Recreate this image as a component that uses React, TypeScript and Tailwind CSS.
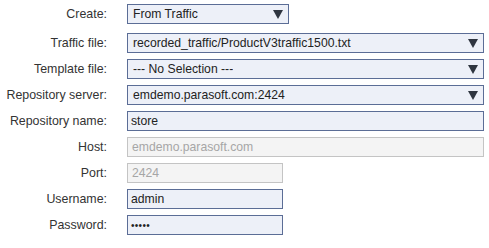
const labelCls =
  'w-[107px] shrink-0 text-right text-[12.4px] text-[#333333] leading-none';

const Select = ({ value, width }: { value: string; width: string }) => (
  <div
    className={`${width} h-[20px] flex items-center justify-between border border-[#5b6d96] bg-[#edf0f8] pl-[5px] pr-[5px] text-[12.2px] text-[#222222]`}
  >
    <span className="truncate">{value}</span>
    <svg width="10" height="9" viewBox="0 0 10 9" className="shrink-0">
      <path d="M0 0 H10 L5 9 Z" fill="#2f3540" />
    </svg>
  </div>
);

const Input = ({
  value,
  width,
  disabled,
  small,
}: {
  value: string;
  width: string;
  disabled?: boolean;
  small?: boolean;
}) => (
  <div
    className={
      disabled
        ? `${width} h-[20px] flex items-center border border-[#c4c4c4] bg-[#f4f4f4] pl-[4px] text-[12.2px] text-[#a6a6a6]`
        : `${width} h-[20px] flex items-center border border-[#5b6d96] bg-[#edf0f8] pl-[3px] text-[#222222] ${small ? 'text-[10px] tracking-[0.3px]' : 'text-[12.2px]'}`
    }
  >
    {value}
  </div>
);

const Row = ({ label, children }: { label: string; children: React.ReactNode }) => (
  <div className="flex items-center gap-[20px]">
    <div className={labelCls}>{label}</div>
    {children}
  </div>
);

export default function App() {
  return (
    <div
      className="w-[489px] h-[248px] bg-white pt-[4px]"
      style={{ fontFamily: '"Liberation Sans", Arial, sans-serif' }}
    >
      <Row label="Create:">
        <Select value="From Traffic" width="w-[162px]" />
      </Row>
      <div className="mt-[9px] flex flex-col gap-[6px]">
        <Row label="Traffic file:">
          <Select value="recorded_traffic/ProductV3traffic1500.txt" width="w-[357px]" />
        </Row>
        <Row label="Template file:">
          <Select value="--- No Selection ---" width="w-[357px]" />
        </Row>
        <Row label="Repository server:">
          <Select value="emdemo.parasoft.com:2424" width="w-[357px]" />
        </Row>
        <Row label="Repository name:">
          <Input value="store" width="w-[357px]" />
        </Row>
        <Row label="Host:">
          <Input value="emdemo.parasoft.com" width="w-[357px]" disabled />
        </Row>
        <Row label="Port:">
          <Input value="2424" width="w-[156px]" disabled />
        </Row>
        <Row label="Username:">
          <Input value="admin" width="w-[156px]" />
        </Row>
        <Row label="Password:">
          <Input value="•••••" width="w-[156px]" small />
        </Row>
      </div>
    </div>
  );
}
